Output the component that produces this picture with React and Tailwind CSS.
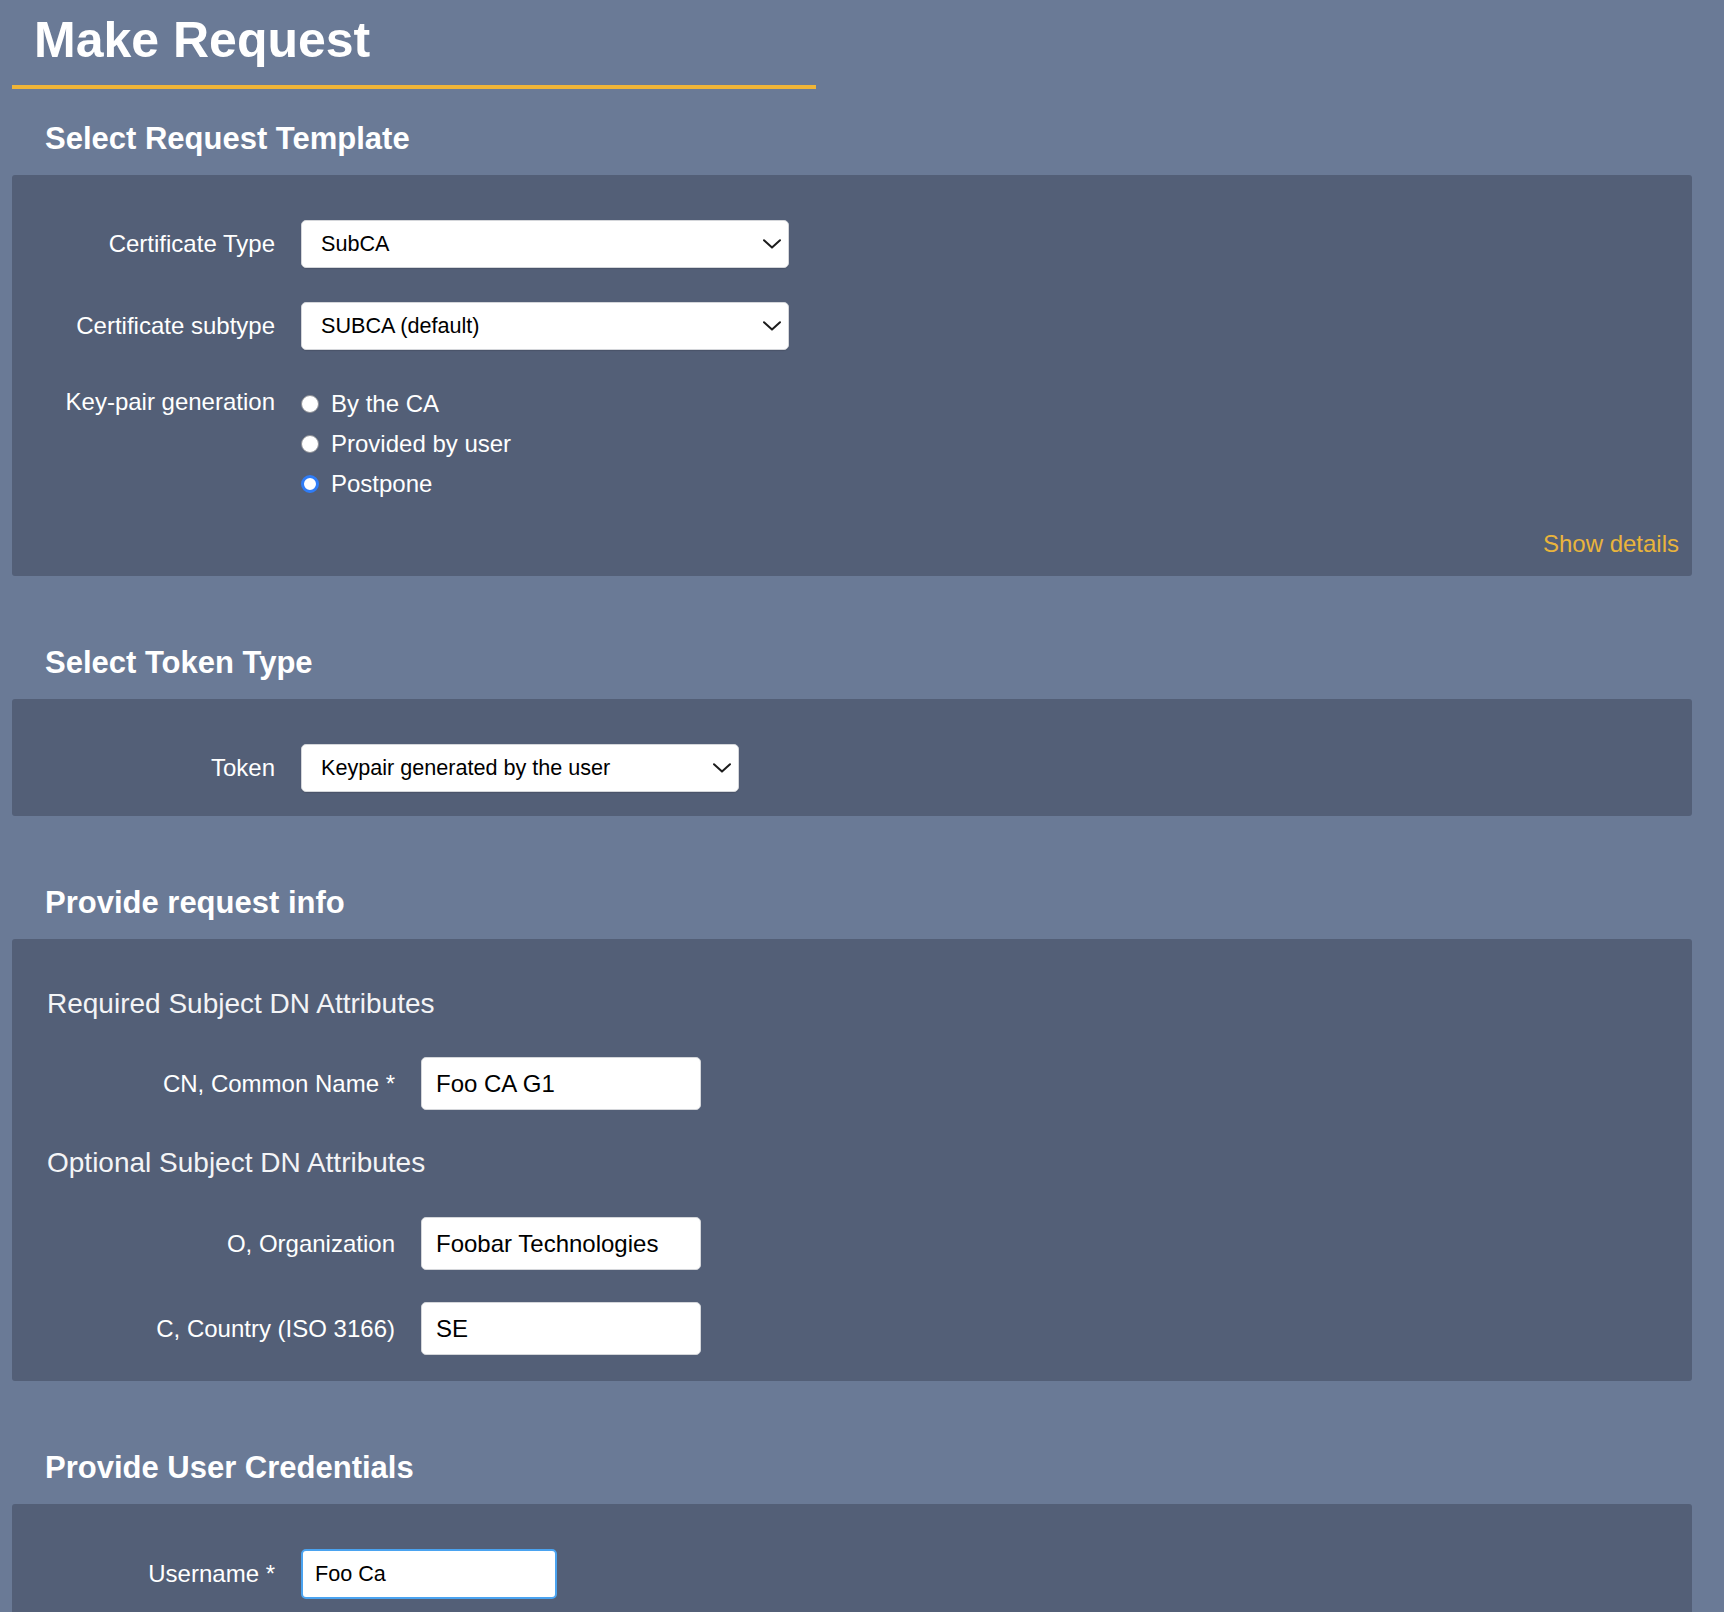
import React from 'react';

const font = { fontFamily: '"Liberation Sans", Arial, Helvetica, sans-serif' };

function Chevron() {
  return (
    <svg width="18" height="10" viewBox="0 0 18 10" fill="none" className="shrink-0">
      <path d="M1 1.2 L9 8.6 L17 1.2" stroke="#1c1c1c" strokeWidth="2" strokeLinecap="round" strokeLinejoin="round" />
    </svg>
  );
}

function SelectBox({ value, width }) {
  return (
    <div
      className="flex h-[48px] items-center justify-between rounded-[5px] border border-[#d4d6da] bg-white pl-[19px] pr-[7px] text-[21.6px] text-black shadow-[0_1px_1px_rgba(0,0,0,0.12)]"
      style={{ width }}
    >
      <span>{value}</span>
      <Chevron />
    </div>
  );
}

function Radio({ checked, label }) {
  return (
    <div className="flex h-[40px] items-center">
      {checked ? (
        <span className="h-[18px] w-[18px] rounded-full border-[3px] border-[#2f7cf6] bg-white" />
      ) : (
        <span className="h-[18px] w-[18px] rounded-full border border-[#8d8f94] bg-white" />
      )}
      <span className="ml-[12px] text-[24px] text-white">{label}</span>
    </div>
  );
}

function SectionTitle({ children, first }) {
  return (
    <h2
      className={`${first ? 'mt-[35px]' : 'mt-[72px]'} mb-[21px] pl-[33px] text-[31px] font-bold leading-[30px] text-white`}
    >
      {children}
    </h2>
  );
}

function TextField({ label, value }) {
  return (
    <div className="flex items-center">
      <label className="w-[383px] text-right text-[24px] text-white">{label}</label>
      <input
        readOnly
        value={value}
        className="ml-[26px] h-[53px] w-[280px] rounded-[5px] border border-[#d4d6da] bg-white pl-[14px] text-[24px] text-black outline-none"
      />
    </div>
  );
}

export default function App() {
  return (
    <div className="min-h-screen bg-[#6a7a96] pb-[40px] pl-[12px] pr-[32px]" style={font}>
      {/* Header */}
      <div className="w-[804px] border-b-4 border-[#f0b537] pb-[20px] pl-[22px] pt-[15px]">
        <h1 className="text-[50px] font-bold leading-[50px] text-white">Make Request</h1>
      </div>

      {/* Request template */}
      <SectionTitle first>Select Request Template</SectionTitle>
      <div className="rounded-[3px] bg-[#535f77] pb-[20px] pr-[13px] pt-[45px]">
        <div className="flex items-center">
          <label className="w-[263px] text-right text-[24px] text-white">Certificate Type</label>
          <div className="ml-[26px]">
            <SelectBox value="SubCA" width={488} />
          </div>
        </div>
        <div className="mt-[34px] flex items-center">
          <label className="w-[263px] text-right text-[24px] text-white">Certificate subtype</label>
          <div className="ml-[26px]">
            <SelectBox value="SUBCA (default)" width={488} />
          </div>
        </div>
        <div className="mt-[34px] flex items-start">
          <label className="w-[263px] text-right text-[24px] leading-[36px] text-white">Key-pair generation</label>
          <div className="ml-[26px] flex flex-col">
            <Radio label="By the CA" />
            <Radio label="Provided by user" />
            <Radio label="Postpone" checked />
          </div>
        </div>
        <div className="mt-[28px] text-right text-[24px] leading-[24px] text-[#e9b43c]">Show details</div>
      </div>

      {/* Token type */}
      <SectionTitle>Select Token Type</SectionTitle>
      <div className="rounded-[3px] bg-[#535f77] pb-[24px] pt-[45px]">
        <div className="flex items-center">
          <label className="w-[263px] text-right text-[24px] text-white">Token</label>
          <div className="ml-[26px]">
            <SelectBox value="Keypair generated by the user" width={438} />
          </div>
        </div>
      </div>

      {/* Request info */}
      <SectionTitle>Provide request info</SectionTitle>
      <div className="rounded-[3px] bg-[#535f77] pb-[26px] pt-[51px]">
        <h3 className="pl-[35px] text-[28px] leading-[28px] text-[#f3f4f6]">Required Subject DN Attributes</h3>
        <div className="mt-[39px]">
          <TextField label="CN, Common Name *" value="Foo CA G1" />
        </div>
        <h3 className="mt-[39px] pl-[35px] text-[28px] leading-[28px] text-[#f3f4f6]">Optional Subject DN Attributes</h3>
        <div className="mt-[40px]">
          <TextField label="O, Organization" value="Foobar Technologies" />
        </div>
        <div className="mt-[32px]">
          <TextField label="C, Country (ISO 3166)" value="SE" />
        </div>
      </div>

      {/* Credentials */}
      <SectionTitle>Provide User Credentials</SectionTitle>
      <div className="rounded-[3px] bg-[#535f77] pb-[60px] pt-[45px]">
        <div className="flex items-center">
          <label className="w-[263px] text-right text-[24px] text-white">Username *</label>
          <input
            readOnly
            value="Foo Ca"
            className="ml-[26px] h-[50px] w-[256px] rounded-[5px] border-2 border-[#4aa3f0] bg-white pl-[12px] text-[21.6px] text-black outline-none"
          />
        </div>
      </div>
    </div>
  );
}
